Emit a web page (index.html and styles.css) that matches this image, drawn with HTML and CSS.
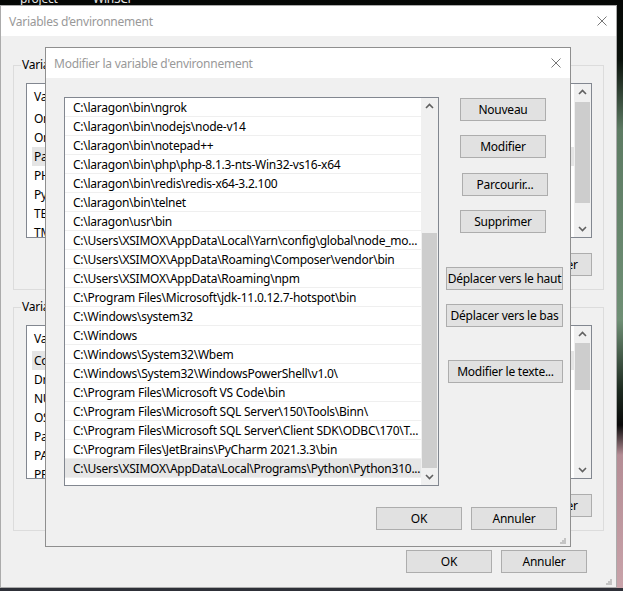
FILE: index.html
```html
<!DOCTYPE html>
<html lang="fr">
<head>
    <meta charset="UTF-8">
    <title>Variables d'environnement</title>
    <link rel="stylesheet" href="styles.css">
</head>
<body>
<div class="desktop">
    <span class="desk-label label-project">project</span>
    <span class="desk-label label-winscp">WinSCP</span>

    <!-- fenetre principale -->
    <div class="window env">
        <div class="titlebar">
            <span class="title">Variables d’environnement</span>
            <svg class="close" width="10" height="10" viewBox="0 0 10 10"><path d="M0.5 0.5L9.5 9.5M9.5 0.5L0.5 9.5"/></svg>
        </div>
        <div class="env-body">
            <fieldset class="group">
                <legend>Variables utilisateur pour XSIMOX</legend>
                <div class="listview">
                    <div class="lv-rows">
                        <div class="lv-head">Variable</div>
                        <div class="lv-row">OneDrive</div>
                        <div class="lv-row">OneDriveConsumer</div>
                        <div class="lv-row selected">Path</div>
                        <div class="lv-row">PHP_HOME</div>
                        <div class="lv-row">PyCharm</div>
                        <div class="lv-row">TEMP</div>
                        <div class="lv-row">TMP</div>
                    </div>
                    <div class="vscroll">
                        <div class="arrow"><svg width="17" height="17"><polyline points="5,10 8.5,6.5 12,10"/></svg></div>
                        <div class="track"><div class="thumb thumb-user"></div></div>
                        <div class="arrow"><svg width="17" height="17"><polyline points="5,7 8.5,10.5 12,7"/></svg></div>
                    </div>
                </div>
                <div class="group-buttons">
                    <button class="btn">Nouvelle...</button>
                    <button class="btn">Modifier...</button>
                    <button class="btn">Supprimer</button>
                </div>
            </fieldset>

            <fieldset class="group group-sys">
                <legend>Variables système</legend>
                <div class="listview lv-sys">
                    <div class="lv-rows">
                        <div class="lv-head">Variable</div>
                        <div class="lv-row selected">ComSpec</div>
                        <div class="lv-row">DriverData</div>
                        <div class="lv-row">NUMBER_OF_PROCESSORS</div>
                        <div class="lv-row">OS</div>
                        <div class="lv-row">Path</div>
                        <div class="lv-row">PATHEXT</div>
                        <div class="lv-row">PROCESSOR_ARCHITECTURE</div>
                    </div>
                    <div class="vscroll">
                        <div class="arrow"><svg width="17" height="17"><polyline points="5,10 8.5,6.5 12,10"/></svg></div>
                        <div class="track"><div class="thumb thumb-sys"></div></div>
                        <div class="arrow"><svg width="17" height="17"><polyline points="5,7 8.5,10.5 12,7"/></svg></div>
                    </div>
                </div>
                <div class="group-buttons">
                    <button class="btn">Nouvelle...</button>
                    <button class="btn">Modifier...</button>
                    <button class="btn">Supprimer</button>
                </div>
            </fieldset>

            <div class="env-footer">
                <button class="btn">OK</button>
                <button class="btn">Annuler</button>
            </div>
        </div>
        <svg class="grip" width="6" height="6" viewBox="0 0 6 6"><path d="M4 0h2v2h-2zM2 2h2v2h-2zM4 2h2v2h-2zM0 4h2v2h-2zM2 4h2v2h-2zM4 4h2v2h-2z"/></svg>
    </div>

    <!-- boite de dialogue Path -->
    <div class="window edit">
        <div class="titlebar">
            <span class="title">Modifier la variable d'environnement</span>
            <svg class="close" width="10" height="10" viewBox="0 0 10 10"><path d="M0.5 0.5L9.5 9.5M9.5 0.5L0.5 9.5"/></svg>
        </div>
        <div class="edit-body">
            <div class="pathlist">
                <div class="path-rows">
                    <div class="path-row">C:\laragon\bin\ngrok</div>
                    <div class="path-row">C:\laragon\bin\nodejs\node-v14</div>
                    <div class="path-row">C:\laragon\bin\notepad++</div>
                    <div class="path-row">C:\laragon\bin\php\php-8.1.3-nts-Win32-vs16-x64</div>
                    <div class="path-row">C:\laragon\bin\redis\redis-x64-3.2.100</div>
                    <div class="path-row">C:\laragon\bin\telnet</div>
                    <div class="path-row">C:\laragon\usr\bin</div>
                    <div class="path-row">C:\Users\XSIMOX\AppData\Local\Yarn\config\global\node_mo...</div>
                    <div class="path-row">C:\Users\XSIMOX\AppData\Roaming\Composer\vendor\bin</div>
                    <div class="path-row">C:\Users\XSIMOX\AppData\Roaming\npm</div>
                    <div class="path-row">C:\Program Files\Microsoft\jdk-11.0.12.7-hotspot\bin</div>
                    <div class="path-row">C:\Windows\system32</div>
                    <div class="path-row">C:\Windows</div>
                    <div class="path-row">C:\Windows\System32\Wbem</div>
                    <div class="path-row">C:\Windows\System32\WindowsPowerShell\v1.0\</div>
                    <div class="path-row">C:\Program Files\Microsoft VS Code\bin</div>
                    <div class="path-row">C:\Program Files\Microsoft SQL Server\150\Tools\Binn\</div>
                    <div class="path-row">C:\Program Files\Microsoft SQL Server\Client SDK\ODBC\170\T...</div>
                    <div class="path-row">C:\Program Files\JetBrains\PyCharm 2021.3.3\bin</div>
                    <div class="path-row selected">C:\Users\XSIMOX\AppData\Local\Programs\Python\Python310...</div>
                </div>
                <div class="vscroll">
                    <div class="arrow"><svg width="17" height="17"><polyline points="5,10 8.5,6.5 12,10"/></svg></div>
                    <div class="track"><div class="thumb thumb-path"></div></div>
                    <div class="arrow"><svg width="17" height="17"><polyline points="5,7 8.5,10.5 12,7"/></svg></div>
                </div>
            </div>
            <div class="side-buttons">
                <button class="btn b-new">Nouveau</button>
                <button class="btn b-edit">Modifier</button>
                <button class="btn b-browse">Parcourir...</button>
                <button class="btn b-del">Supprimer</button>
                <button class="btn wide b-up">Déplacer vers le haut</button>
                <button class="btn wide b-down">Déplacer vers le bas</button>
                <button class="btn wide b-text">Modifier le texte...</button>
            </div>
        </div>
        <div class="edit-footer">
            <button class="btn">OK</button>
            <button class="btn">Annuler</button>
        </div>
        <svg class="grip" width="6" height="6" viewBox="0 0 6 6"><path d="M4 0h2v2h-2zM2 2h2v2h-2zM4 2h2v2h-2zM0 4h2v2h-2zM2 4h2v2h-2zM4 4h2v2h-2z"/></svg>
    </div>
</div>
</body>
</html>
```

FILE: styles.css
```css
* {
    box-sizing: border-box;
}
body {
    margin: 0;
    background: #000;
    font-family: "Segoe UI", "Noto Sans", sans-serif;
    font-size: 12px;
    letter-spacing: -0.25px;
    color: #000;
}
.desktop {
    position: relative;
    width: 623px;
    height: 591px;
    overflow: hidden;
    background:
        linear-gradient(#2e3038, #2e3038) left bottom / 100% 3px no-repeat,
        linear-gradient(to bottom, #050705 0, #0b120c 60px, #5d7b63 130px, #6f8f75 320px, #1d2a20 390px, #0a0a0a 425px, #b48d95 455px, #c9a3aa 591px);
}
.desk-label {
    position: absolute;
    top: -10px;
    color: #e8e8e8;
    font-size: 12px;
}
.label-project { left: 20px; }
.label-winscp { left: 93px; }

/* fenetres */
.window {
    position: absolute;
    background: #f0f0f0;
    border: 1px solid #ababab;
}
.env {
    left: 0;
    top: 5px;
    width: 617px;
    height: 583px;
}
.edit {
    left: 45px;
    top: 47px;
    width: 526px;
    height: 500px;
    border-color: #8f8f8f;
}
.titlebar {
    height: 30px;
    background: #fff;
    display: flex;
    align-items: center;
    justify-content: space-between;
    padding: 0 9px 0 8px;
}
.title {
    color: #999;
}
.close path {
    stroke: #777;
    stroke-width: 1;
    fill: none;
}
.grip {
    position: absolute;
    right: 4px;
    bottom: 2px;
}
.grip path {
    fill: #c4c4c4;
}

.btn {
    width: 86px;
    height: 23px;
    padding: 0;
    background: #e1e1e1;
    border: 1px solid #adadad;
    font-family: inherit;
    font-size: 12px;
    letter-spacing: inherit;
    white-space: nowrap;
    color: #000;
}

/* variables d'environnement */
.env-body {
    padding: 21px 12px 0 12px;
}
.group {
    margin: 0;
    border: 1px solid #dcdcdc;
    padding: 10px 11px 13px 12px;
}
.group legend {
    margin-left: -5px;
    padding: 0 1px;
    line-height: 16px;
}
.group-sys {
    margin-top: 9px;
}
.listview {
    display: flex;
    height: 155px;
    background: #fff;
    border: 1px solid #828790;
}
.lv-sys {
    height: 154px;
}
.lv-rows {
    flex: 1;
    overflow: hidden;
    white-space: nowrap;
}
.lv-head {
    height: 25px;
    line-height: 25px;
    padding-left: 7px;
}
.lv-row {
    height: 19px;
    line-height: 19px;
    margin-left: 5px;
    padding-left: 2px;
}
.lv-row.selected {
    background: #e5e5e5;
}
.group-buttons {
    display: flex;
    justify-content: flex-end;
    gap: 9px;
    margin-top: 15px;
}
.env-footer {
    display: flex;
    justify-content: flex-end;
    gap: 9px;
    margin-top: 19px;
    padding-right: 17px;
}

/* barre de defilement */
.vscroll {
    width: 17px;
    background: #f0f0f0;
    display: flex;
    flex-direction: column;
}
.arrow {
    height: 17px;
}
.arrow svg {
    display: block;
}
.arrow polyline {
    fill: none;
    stroke: #606060;
    stroke-width: 1.6;
}
.track {
    flex: 1;
}
.thumb {
    margin: 0 1px;
    background: #cdcdcd;
}
.thumb-user { margin-top: 1px; height: 101px; }
.thumb-sys { height: 47px; }
.thumb-path { margin-top: 118px; height: 235px; }

/* modifier la variable */
.edit-body {
    display: flex;
    padding: 19px 0 0 18px;
}
.pathlist {
    display: flex;
    width: 375px;
    height: 389px;
    background: #fff;
    border: 1px solid #828790;
}
.path-rows {
    flex: 1;
    overflow: hidden;
}
.path-row {
    height: 19px;
    line-height: 19px;
    padding-left: 8px;
    border-bottom: 1px solid #efefef;
    white-space: nowrap;
    overflow: hidden;
    text-overflow: ellipsis;
}
.path-row.selected {
    background: #e6e6e6;
}
.side-buttons {
    display: flex;
    flex-direction: column;
    align-items: flex-start;
    margin-left: 7px;
}
.wide {
    width: 117px;
}
.b-new { margin: 1px 0 0 14px; }
.b-edit { margin: 14px 0 0 14px; }
.b-browse { margin: 15px 0 0 16px; }
.b-del { margin: 14px 0 0 14px; }
.b-up { margin-top: 34px; }
.b-down { margin-top: 14px; }
.b-text { margin: 33px 0 0 2px; width: 115px; }
.edit-footer {
    display: flex;
    justify-content: flex-end;
    gap: 9px;
    margin-top: 21px;
    padding-right: 13px;
}
```
